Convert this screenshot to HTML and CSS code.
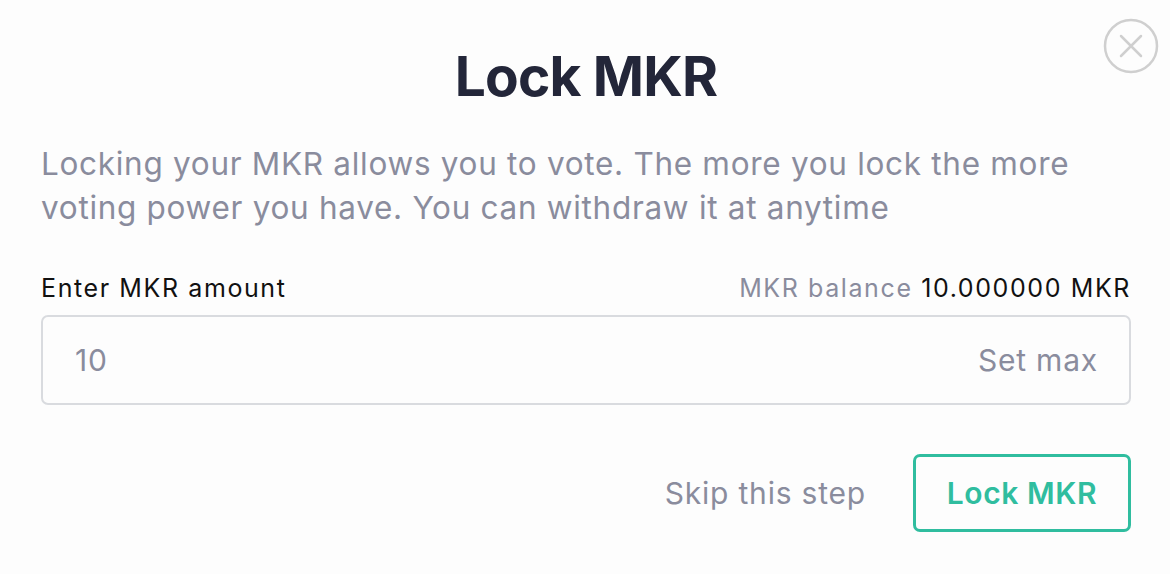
FILE: index.html
```html
<!DOCTYPE html>
<html lang="en">
<head>
<meta charset="utf-8">
<title>Lock MKR</title>
<link rel="stylesheet" href="styles.css">
</head>
<body>
<div class="modal">
  <button class="close" aria-label="Close">
    <svg width="56" height="56" viewBox="0 0 56 56">
      <circle cx="28" cy="28" r="26" fill="none" stroke="#cfcfcf" stroke-width="2.5"/>
      <path d="M18 18 L38 38 M38 18 L18 38" stroke="#cfcfcf" stroke-width="2.5" stroke-linecap="round"/>
    </svg>
  </button>
  <h1 class="title">Lock MKR</h1>
  <p class="desc">Locking your MKR allows you to vote. The more you lock the more voting power you have. You can withdraw it at anytime</p>
  <div class="label-row">
    <span class="label">Enter MKR amount</span>
    <span class="balance"><span class="muted">MKR balance</span> 10.000000 MKR</span>
  </div>
  <div class="field">
    <span class="value">10</span>
    <span class="setmax">Set max</span>
  </div>
  <div class="actions">
    <span class="skip">Skip this step</span>
    <button class="lock">Lock MKR</button>
  </div>
</div>
</body>
</html>
```

FILE: styles.css
```css
html, body {
  margin: 0;
  padding: 0;
  background: #fdfdfd;
}
body {
  font-family: Inter, "Noto Sans", sans-serif;
  width: 1170px;
  height: 574px;
  overflow: hidden;
}
.modal {
  position: relative;
  padding: 41px 39px 0 41px;
  display: flex;
  flex-direction: column;
}
.close {
  position: absolute;
  top: 18px;
  right: 11px;
  width: 56px;
  height: 56px;
  padding: 0;
  border: 0;
  background: transparent;
  display: flex;
}
.title {
  margin: 0;
  font-size: 55px;
  line-height: 70px;
  font-weight: 700;
  color: #232639;
  text-align: center;
  letter-spacing: -0.8px;
}
.desc {
  margin: 31px 0 0 0;
  font-size: 31.5px;
  line-height: 44px;
  color: #8a8c9d;
  font-weight: 400;
  letter-spacing: 0.7px;
}
.label-row {
  margin-top: 43px;
  display: flex;
  justify-content: space-between;
  align-items: baseline;
  font-size: 25px;
  line-height: 30px;
  letter-spacing: 1.6px;
}
.label {
  color: #111;
}
.balance {
  color: #111;
}
.muted {
  color: #8a8c9d;
}
.field {
  margin-top: 12px;
  height: 86px;
  border: 2px solid #d9dbdf;
  border-radius: 7px;
  display: flex;
  align-items: center;
  justify-content: space-between;
  padding: 0 31px 0 32px;
  font-size: 30px;
  color: #8a8c9d;
  letter-spacing: 0.8px;
}
.actions {
  margin-top: 49px;
  display: flex;
  justify-content: flex-end;
  align-items: center;
  gap: 47px;
}
.skip {
  font-size: 30px;
  color: #8a8c9d;
  letter-spacing: 0.8px;
}
.lock {
  font-family: Inter, "Noto Sans", sans-serif;
  width: 218px;
  height: 78px;
  border: 3px solid #30bd9f;
  border-radius: 7px;
  background: transparent;
  color: #30bd9f;
  font-size: 30px;
  font-weight: 600;
  letter-spacing: 0.6px;
  padding: 0;
}
```
